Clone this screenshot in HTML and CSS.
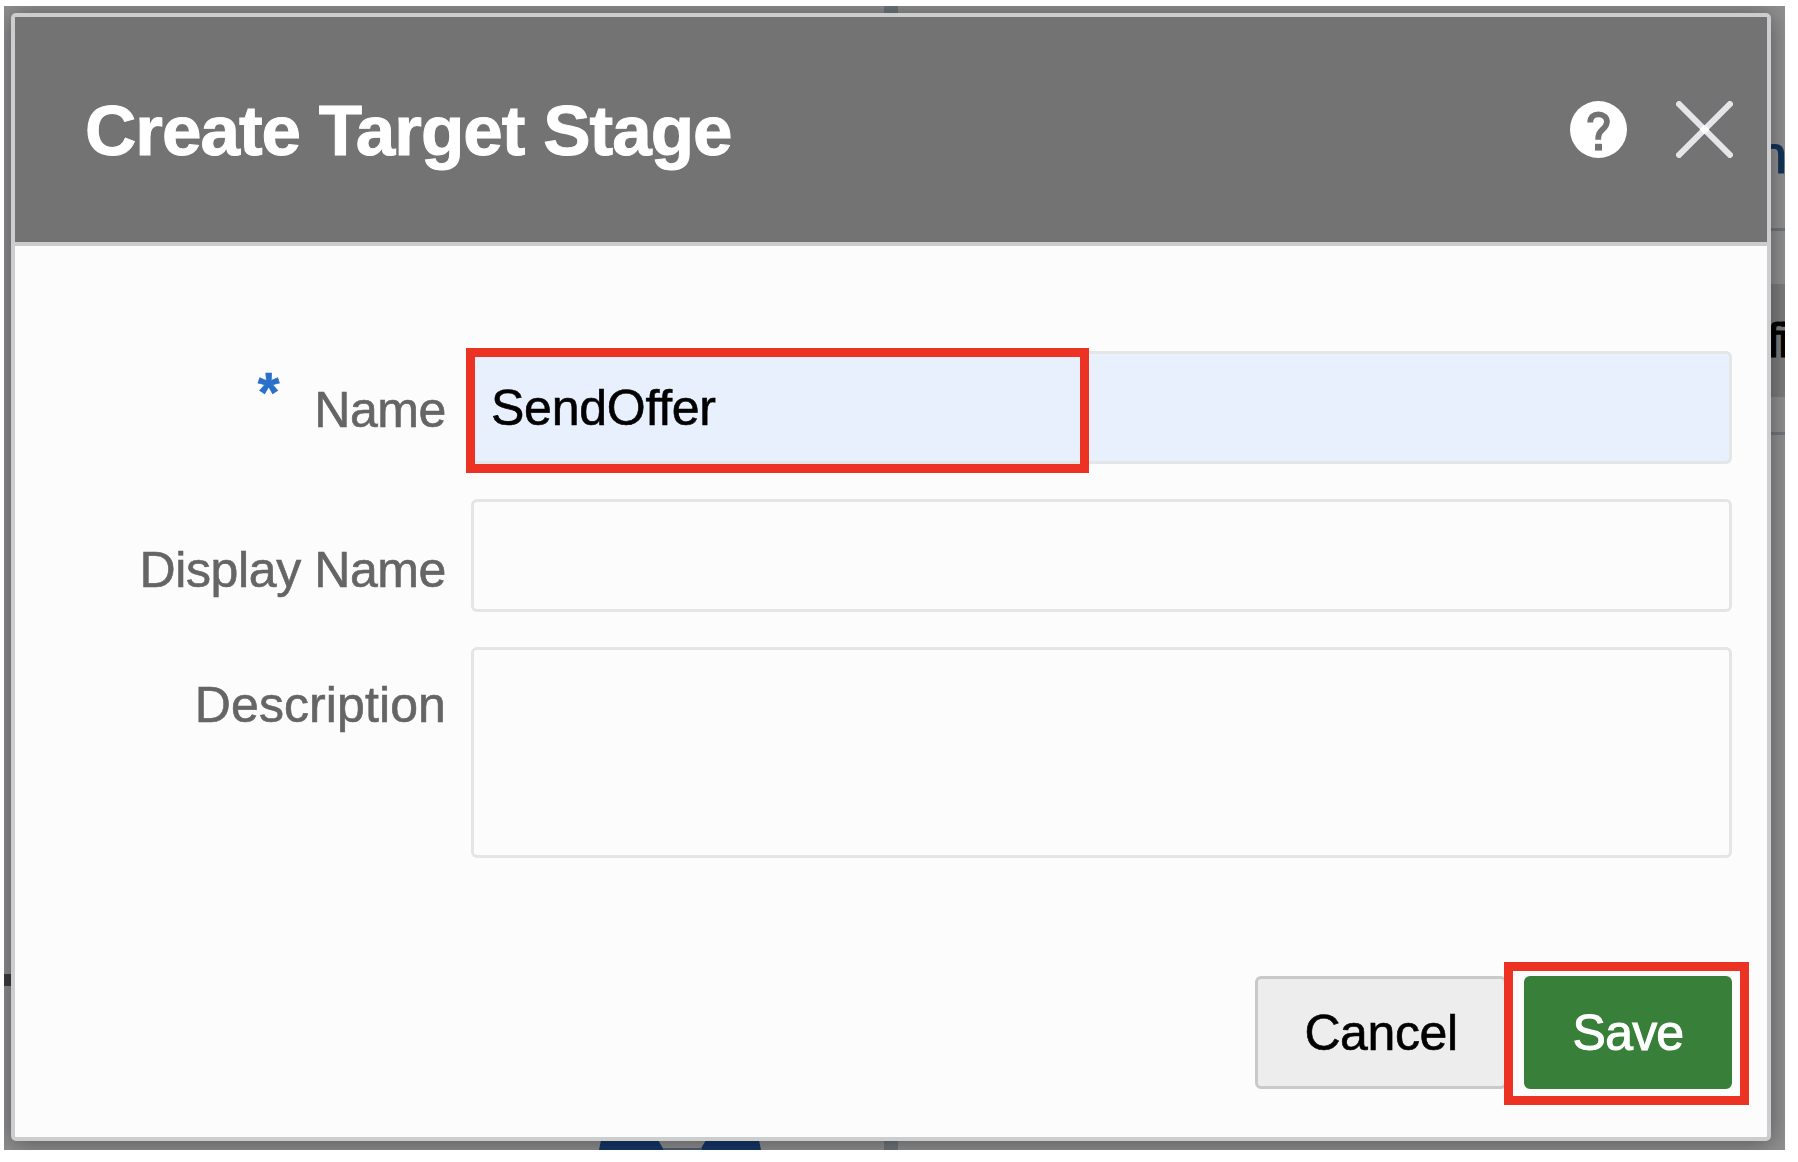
FILE: index.html
```html
<!DOCTYPE html>
<html lang="en">
<head>
<meta charset="utf-8">
<title>Create Target Stage</title>
<link rel="stylesheet" href="styles.css">
</head>
<body>
<div class="backdrop">
  <svg class="canvas" viewBox="0 0 1781 1144" aria-hidden="true">
    <rect x="880" y="0" width="14" height="1144" fill="#6f777b"/>
    <rect x="1760" y="278" width="21" height="113" fill="#7d7d7d"/>
    <rect x="1760" y="222" width="21" height="3" fill="#70787d"/>
    <rect x="1760" y="426" width="21" height="3" fill="#70787d"/>
    <rect x="0" y="968" width="12" height="12" fill="#3d3d3d"/>
    <path d="M597 1134H654L660 1144H595ZM702 1134H755L757 1144H696Z" fill="#16386a"/>
    <rect x="659" y="1142" width="39" height="2" fill="#4c6077"/>
  </svg>
  <span class="behind behind-link">n</span>
  <span class="behind behind-text">fi</span>
  <section class="dialog">
    <header class="dialog-header">
      <h1 class="title">Create Target Stage</h1>
      <div class="tools">
        <svg class="icon" viewBox="0 0 57 57" role="img" aria-label="Help">
          <circle cx="28.5" cy="28.5" r="28.5" fill="#fff"/>
          <path d="M20.2 21.5C20.2 16 23.6 13.4 28.3 13.4C33.4 13.4 36.9 16.3 36.9 20.8C36.9 24.3 35.2 26.1 32.4 28.7C29.3 31.6 28.2 33.3 28.2 38.8" fill="none" stroke="#737373" stroke-width="5.8"/>
          <rect x="25" y="42.8" width="7" height="6.8" fill="#737373"/>
        </svg>
        <svg class="icon" viewBox="0 0 57 57" role="img" aria-label="Close">
          <path d="M1 1L56 56M56 1L1 56" stroke="#e6e6ea" stroke-width="6"/>
          <path d="M26 26L31 31M31 26L26 31" stroke="#fff" stroke-width="6"/>
        </svg>
      </div>
    </header>
    <div class="dialog-body">
      <div class="form">
        <label class="label label-name"><span class="required">*</span><span>Name</span></label>
        <div class="field field-filled">SendOffer<span class="marker marker-name"></span></div>
        <label class="label label-display">Display Name</label>
        <div class="field"></div>
        <label class="label label-description">Description</label>
        <div class="field field-area"></div>
      </div>
      <footer class="actions">
        <div class="button">Cancel</div>
        <div class="button button-primary">Save<span class="marker marker-save"></span></div>
      </footer>
    </div>
  </section>
</div>
</body>
</html>
```
FILE: styles.css
```css
* { box-sizing: border-box; }

body {
  margin: 0;
  width: 1798px;
  height: 1162px;
  overflow: hidden;
  background: #fff;
  font-family: "Liberation Sans", Arial, sans-serif;
  font-size: 50px;
  letter-spacing: -0.25px;
  -webkit-text-stroke: 0.6px currentColor;
}

.backdrop {
  position: relative;
  width: 1781px;
  height: 1144px;
  margin: 6px 0 0 4px;
  padding: 7px 0 0 7px;
  overflow: hidden;
  background: #909090;
}

.canvas {
  position: absolute;
  inset: 0;
  width: 1781px;
  height: 1144px;
}

.behind {
  position: absolute;
  line-height: 60px;
  white-space: nowrap;
}

.behind-link { left: 1753px; top: 118px; color: #123458; font-size: 54px; -webkit-text-stroke-width: 1.2px; }
.behind-text { left: 1763px; top: 305px; color: #000; font-size: 48px; letter-spacing: -2px; -webkit-text-stroke-width: 1.2px; }

.dialog {
  position: relative;
  width: 1760px;
  height: 1128px;
  border: 4px solid #cbcdce;
  border-radius: 5px;
  background: #fcfcfc;
  box-shadow: 0 2px 24px rgba(0, 0, 0, 0.42);
}

.dialog-header {
  display: flex;
  align-items: center;
  justify-content: space-between;
  height: 229px;
  padding: 0 34px 0 70px;
  border-bottom: 4px solid #cbcdcc;
  background: #737373;
}

.title {
  margin: 0;
  padding-top: 3px;
  color: #fff;
  font-size: 71px;
  line-height: 80px;
  letter-spacing: -1px;
  -webkit-text-stroke-width: 1px;
}

.tools { display: flex; gap: 49px; padding-bottom: 1px; }
.icon { display: block; width: 57px; height: 57px; overflow: hidden; }

.dialog-body { padding: 105px 35px 0 70px; }

.form {
  display: grid;
  grid-template-columns: 361px 1261px;
  column-gap: 25px;
  row-gap: 35px;
}

.label {
  color: #656565;
  line-height: 60px;
  text-align: right;
  letter-spacing: -0.4px;
}

.label-name { display: flex; justify-content: flex-end; padding-top: 29px; }
.label-display { padding-top: 41px; }
.label-description { padding-top: 28px; letter-spacing: 0.1px; }

.required {
  margin: -18px 35px 0 0;
  color: #2970ca;
  font-size: 56px;
  font-weight: bold;
}

.field {
  position: relative;
  height: 113px;
  border: 3px solid #e4e6e6;
  border-radius: 6px;
  background: #fcfcfc;
}

.field-filled {
  padding: 24px 0 0 17px;
  background: #e8effd;
  color: #000;
  line-height: 60px;
}

.field-area { height: 211px; }

.actions {
  display: flex;
  justify-content: flex-end;
  gap: 17px;
  padding-top: 118px;
}

.button {
  position: relative;
  display: flex;
  align-items: center;
  justify-content: center;
  width: 252px;
  height: 113px;
  border: 3px solid #c7c9cb;
  border-radius: 6px;
  background: #ededed;
  color: #000;
  letter-spacing: -0.4px;
}

.button-primary {
  width: 208px;
  border-color: #38803a;
  background: #38803a;
  color: #fff;
  letter-spacing: -0.8px;
  -webkit-text-stroke: 1px #fff;
}

.marker {
  position: absolute;
  border: 9px solid #ec3223;
}

.marker-name { left: -8px; top: -6px; width: 623px; height: 125px; }
.marker-save { left: -23px; top: -17px; width: 245px; height: 143px; }
```
